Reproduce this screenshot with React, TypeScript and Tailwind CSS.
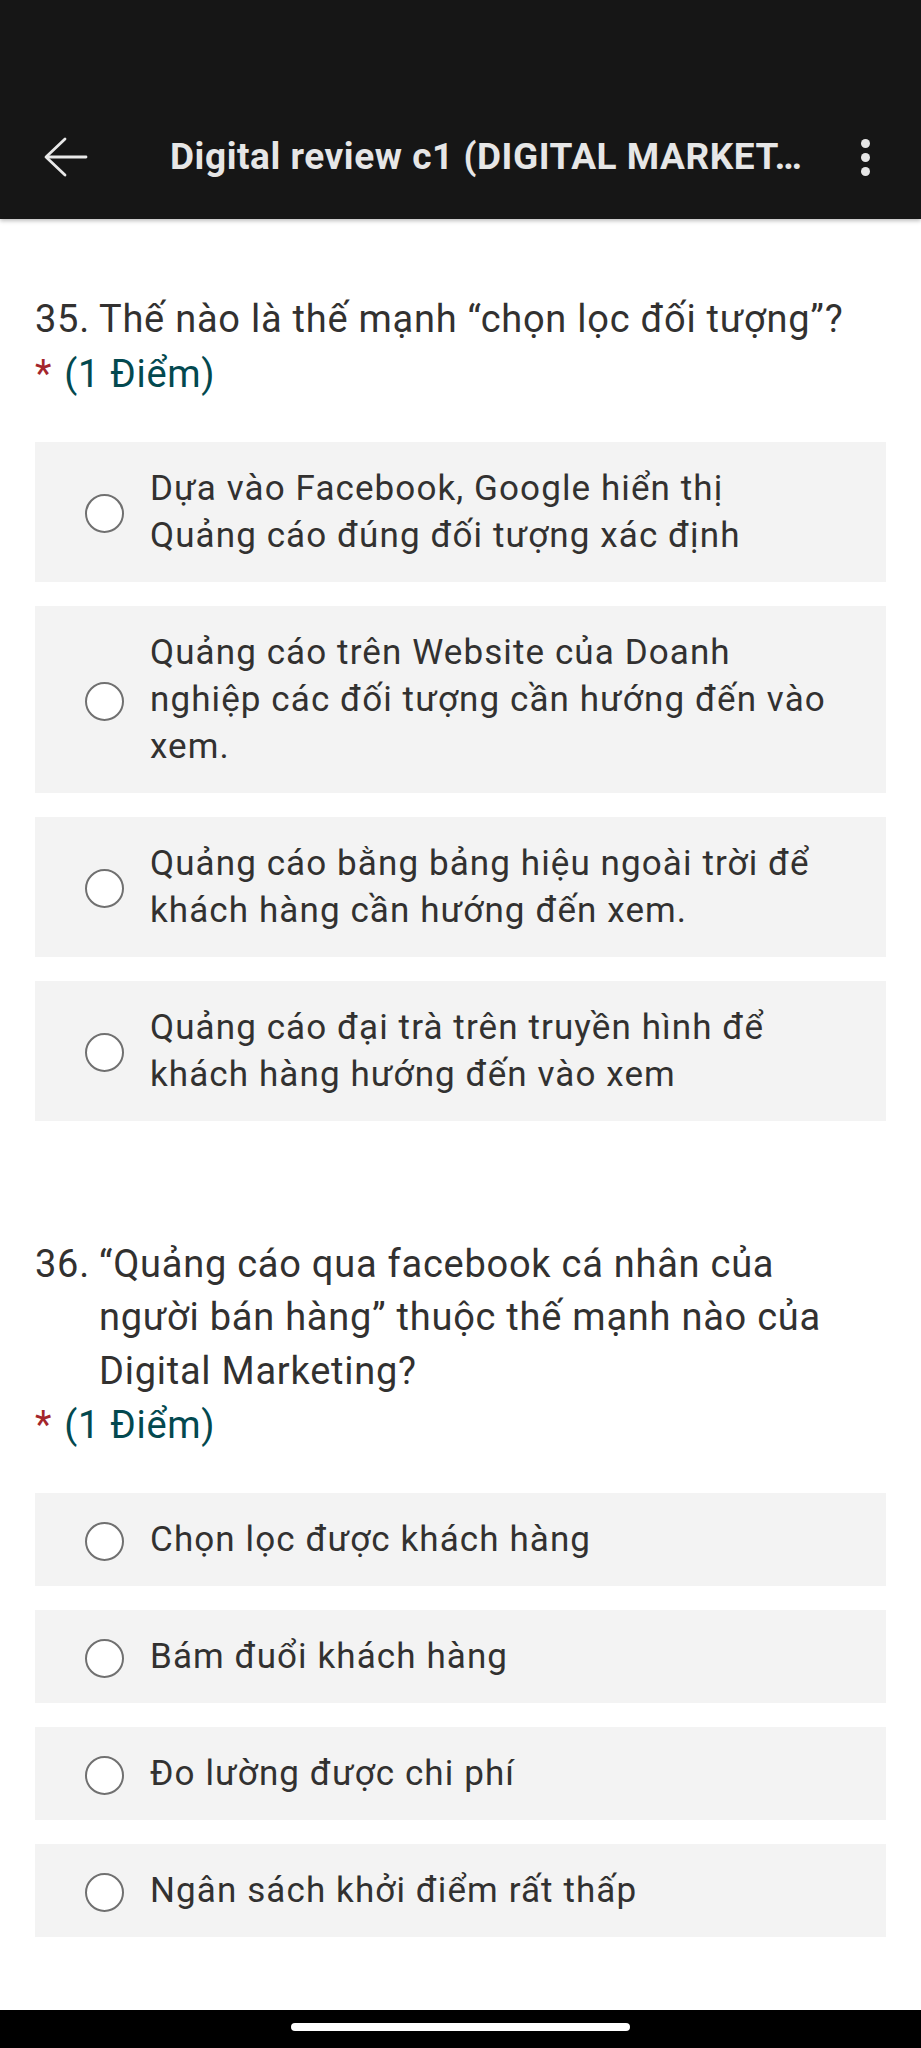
import React from "react"

const font = { fontFamily: "Roboto, 'Noto Sans', sans-serif" }

function Radio() {
  return <div className="mt-[4px] h-[39px] w-[39px] shrink-0 rounded-full border-[2.5px] border-[#707070] bg-white" />
}

function Option({ lines }: { lines: string[] }) {
  return (
    <div className="flex items-center bg-[#f3f3f3] py-[23px] pl-[50px] pr-[10px]">
      <Radio />
      <div className="ml-[26px] text-[35px] leading-[47px] tracking-[1.1px] text-[#323130]">
        {lines.map((l, i) => (
          <div key={i} className="whitespace-nowrap">{l}</div>
        ))}
      </div>
    </div>
  )
}

function Question({ num, lines, options, className }: { num: string; lines: string[]; options: string[][]; className: string }) {
  return (
    <section className={className}>
      <div className="flex text-[38px] leading-[53.5px] tracking-[0.75px] text-[#323130]">
        <span className="w-[64px] shrink-0">{num}</span>
        <div>
          {lines.map((l, i) => (
            <div key={i} className="whitespace-nowrap">{l}</div>
          ))}
        </div>
      </div>
      <div className="flex text-[38px] leading-[54px] tracking-[0.75px]">
        <span className="text-[#a4262c]">*</span>
        <span className="ml-[12px] text-[#03494f]">(1 Điểm)</span>
      </div>
      <div className="mt-[41px] flex flex-col gap-[24px]">
        {options.map((o, i) => (
          <Option key={i} lines={o} />
        ))}
      </div>
    </section>
  )
}

export default function App() {
  return (
    <div className="flex h-[2048px] w-full flex-col bg-white" style={font}>
      <header className="relative z-10 h-[219px] shrink-0 bg-[#161616] pt-[95px] shadow-[0_2px_4px_rgba(0,0,0,0.25)]">
        <div className="flex h-[124px] items-center pl-[44px] pr-[51px]">
          <svg width="44" height="40" viewBox="0 0 44 40" fill="none" stroke="#e8e8e8" strokeWidth="2.8" strokeLinecap="round" strokeLinejoin="round">
            <path d="M42 20H3" />
            <path d="M21 2L2 20L21 38" />
          </svg>
          <div className="ml-[82px] flex-1 whitespace-nowrap text-[37px] font-bold tracking-[0.55px] text-[#e6e6e6]">
            Digital review c1 (DIGITAL MARKET…
          </div>
          <div className="flex flex-col gap-[5px]">
            <div className="h-[9px] w-[9px] rounded-full bg-[#e6e6e6]" />
            <div className="h-[9px] w-[9px] rounded-full bg-[#e6e6e6]" />
            <div className="h-[9px] w-[9px] rounded-full bg-[#e6e6e6]" />
          </div>
        </div>
      </header>

      <main className="px-[35px]">
        <Question
          className="pt-[74px]"
          num="35."
          lines={["Thế nào là thế mạnh “chọn lọc đối tượng”?"]}
          options={[
            ["Dựa vào Facebook, Google hiển thị", "Quảng cáo đúng đối tượng xác định"],
            ["Quảng cáo trên Website của Doanh", "nghiệp các đối tượng cần hướng đến vào", "xem."],
            ["Quảng cáo bằng bảng hiệu ngoài trời để", "khách hàng cần hướng đến xem."],
            ["Quảng cáo đại trà trên truyền hình để", "khách hàng hướng đến vào xem"],
          ]}
        />
        <Question
          className="pt-[117px]"
          num="36."
          lines={["“Quảng cáo qua facebook cá nhân của", "người bán hàng” thuộc thế mạnh nào của", "Digital Marketing?"]}
          options={[
            ["Chọn lọc được khách hàng"],
            ["Bám đuổi khách hàng"],
            ["Đo lường được chi phí"],
            ["Ngân sách khởi điểm rất thấp"],
          ]}
        />
      </main>

      <div className="flex-1" />
      <div className="flex h-[38px] shrink-0 justify-center bg-black pt-[13px]">
        <div className="h-[8px] w-[339px] rounded-full bg-white" />
      </div>
    </div>
  )
}
